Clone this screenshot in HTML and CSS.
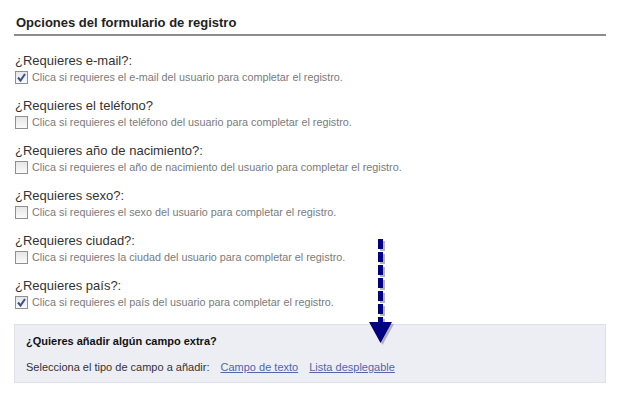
FILE: index.html
```html
<!DOCTYPE html>
<html lang="es">
<head>
    <meta charset="UTF-8">
    <title>Opciones del formulario de registro</title>
    <link rel="stylesheet" href="styles.css">
</head>
<body>
    <div class="panel">
        <h2 class="panel-title">Opciones del formulario de registro</h2>

        <div class="option">
            <div class="option-label">¿Requieres e-mail?:</div>
            <label class="option-check">
                <span class="box checked"><svg viewBox="0 0 13 13" width="13" height="13"><path d="M3 6.5 L5.5 9.5 L10 3" fill="none" stroke="#3b4f8e" stroke-width="2"/></svg></span>
                Clica si requieres el e-mail del usuario para completar el registro.
            </label>
        </div>

        <div class="option">
            <div class="option-label">¿Requieres el teléfono?</div>
            <label class="option-check">
                <span class="box"></span>
                Clica si requieres el teléfono del usuario para completar el registro.
            </label>
        </div>

        <div class="option">
            <div class="option-label">¿Requieres año de nacimiento?:</div>
            <label class="option-check">
                <span class="box"></span>
                Clica si requieres el año de nacimiento del usuario para completar el registro.
            </label>
        </div>

        <div class="option">
            <div class="option-label">¿Requieres sexo?:</div>
            <label class="option-check">
                <span class="box"></span>
                Clica si requieres el sexo del usuario para completar el registro.
            </label>
        </div>

        <div class="option">
            <div class="option-label">¿Requieres ciudad?:</div>
            <label class="option-check">
                <span class="box"></span>
                Clica si requieres la ciudad del usuario para completar el registro.
            </label>
        </div>

        <div class="option">
            <div class="option-label">¿Requieres país?:</div>
            <label class="option-check">
                <span class="box checked"><svg viewBox="0 0 13 13" width="13" height="13"><path d="M3 6.5 L5.5 9.5 L10 3" fill="none" stroke="#3b4f8e" stroke-width="2"/></svg></span>
                Clica si requieres el país del usuario para completar el registro.
            </label>
        </div>

        <div class="extra">
            <div class="extra-title">¿Quieres añadir algún campo extra?</div>
            <div class="extra-row">
                Selecciona el tipo de campo a añadir:
                <a href="#" class="extra-link">Campo de texto</a>
                <a href="#" class="extra-link">Lista desplegable</a>
            </div>
        </div>

        <!-- flecha que señala al bloque de campos extra -->
        <svg class="pointer" width="40" height="112" viewBox="0 0 40 112">
            <g fill="#9a9a9a" opacity="0.7" transform="translate(2,2)">
                <rect x="16" y="0" width="5" height="10"/>
                <rect x="16" y="13" width="5" height="10"/>
                <rect x="16" y="26" width="5" height="10"/>
                <rect x="16" y="39" width="5" height="10"/>
                <rect x="16" y="52" width="5" height="10"/>
                <rect x="16" y="65" width="5" height="10"/>
                <rect x="16" y="78" width="5" height="6"/>
                <polygon points="7,83 30,83 18.5,104"/>
            </g>
            <g fill="#000080">
                <rect x="16" y="0" width="5" height="10"/>
                <rect x="16" y="13" width="5" height="10"/>
                <rect x="16" y="26" width="5" height="10"/>
                <rect x="16" y="39" width="5" height="10"/>
                <rect x="16" y="52" width="5" height="10"/>
                <rect x="16" y="65" width="5" height="10"/>
                <rect x="16" y="78" width="5" height="6"/>
                <polygon points="7,83 30,83 18.5,104"/>
            </g>
        </svg>
    </div>
</body>
</html>
```

FILE: styles.css
```css
body {
    margin: 0;
    background: #fff;
    font-family: "Liberation Sans", Arial, sans-serif;
    color: #333;
}

.panel {
    position: relative;
    width: 592px;
    margin-left: 14px;
    padding-top: 15px;
}

.panel-title {
    margin: 0 0 17px 0;
    padding: 0 0 4px 2px;
    font-size: 13px;
    line-height: 15px;
    font-weight: bold;
    color: #222;
    border-bottom: 2px solid #8c8c8c;
}

.option {
    margin-bottom: 13px;
    padding-left: 1px;
}

.option-label {
    font-size: 13px;
    line-height: 16px;
    color: #333;
}

.option-check {
    display: flex;
    align-items: center;
    gap: 4px;
    font-size: 10.8px;
    line-height: 16px;
    color: #7a7a7a;
}

.box {
    display: inline-block;
    width: 11px;
    height: 11px;
    border: 1px solid #8f8f8f;
    background: linear-gradient(#e6e6e6, #fafafa);
    position: relative;
    flex-shrink: 0;
}

.box svg {
    position: absolute;
    left: -1px;
    top: -1px;
}

.extra {
    margin-top: 14px;
    background: #eceef4;
    border: 1px solid #dfe1e8;
    padding: 9px 11px 8px 11px;
}

.extra-title {
    font-size: 11px;
    line-height: 14px;
    font-weight: bold;
    color: #111;
}

.extra-row {
    margin-top: 12px;
    font-size: 11px;
    line-height: 14px;
    color: #333;
}

.extra-link {
    color: #5465a8;
    margin-left: 8px;
}

.pointer {
    position: absolute;
    left: 348px;
    top: 239px;
}
```
